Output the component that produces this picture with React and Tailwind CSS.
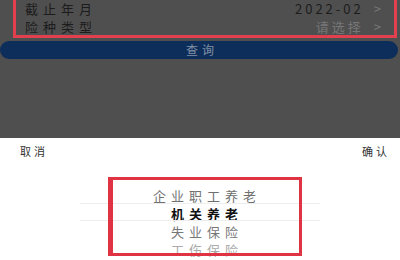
import React from 'react';

const font = { fontFamily: '"Noto Sans CJK SC", "Noto Sans", sans-serif' };

const options = [
  { label: '企业职工养老', cls: 'text-[#6f6f6f]' },
  { label: '机关养老', cls: 'text-[#111] font-bold' },
  { label: '失业保险', cls: 'text-[#777]' },
  { label: '工伤保险', cls: 'text-[#aaa]' },
];

const App = () => {
  return (
    <div className="w-[400px] h-[260px] overflow-hidden bg-[#4f4f4f] flex flex-col" style={font}>
      <div className="ml-[13px] mr-[3px] h-[38px] border-x-[3px] border-b-[3px] border-[#e3404f] pl-[9px] pr-[13px] flex flex-col text-[13px] leading-none">
        <div className="h-[18px] flex items-center justify-between text-[#1c1c1c]">
          <span className="tracking-[5px]">截止年月</span>
          <span className="flex items-center gap-[10px]">
            <span className="tracking-[3px]">2022-02</span>
            <span className="text-[#777]">&gt;</span>
          </span>
        </div>
        <div className="h-[18px] flex items-center justify-between">
          <span className="tracking-[5px] text-[#1c1c1c]">险种类型</span>
          <span className="flex items-center gap-[10px] text-[#777]">
            <span className="tracking-[3px]">请选择</span>
            <span>&gt;</span>
          </span>
        </div>
      </div>
      <div className="mt-[3px] mr-[2px] h-[18px] rounded-full bg-[#0d2e5a] flex items-center justify-center pl-[6px] text-[12px] text-[#8090a6] tracking-[4px]">
        查询
      </div>
      <div className="flex-1" />
      <div className="h-[122px] bg-white flex flex-col">
        <div className="h-[26px] flex items-center justify-between pl-[20px] pr-[10px] text-[11px] text-[#333] tracking-[3px]">
          <span>取消</span>
          <span>确认</span>
        </div>
        <div className="relative flex-1">
          <div className="absolute left-[80px] right-[80px] top-[39px] h-[18px] border-y border-[#eee]" />
          <div className="absolute left-[108px] top-[13px] w-[194px] h-[79px] border-[3px] border-l-[5px] border-[#df3242]" />
          <div className="pt-[23px] pl-[14px] flex flex-col items-center text-[13px] leading-[18px] tracking-[5px]">
            {options.map((o) => (
              <div key={o.label} className={o.cls}>{o.label}</div>
            ))}
          </div>
        </div>
      </div>
    </div>
  );
};

export default App;
